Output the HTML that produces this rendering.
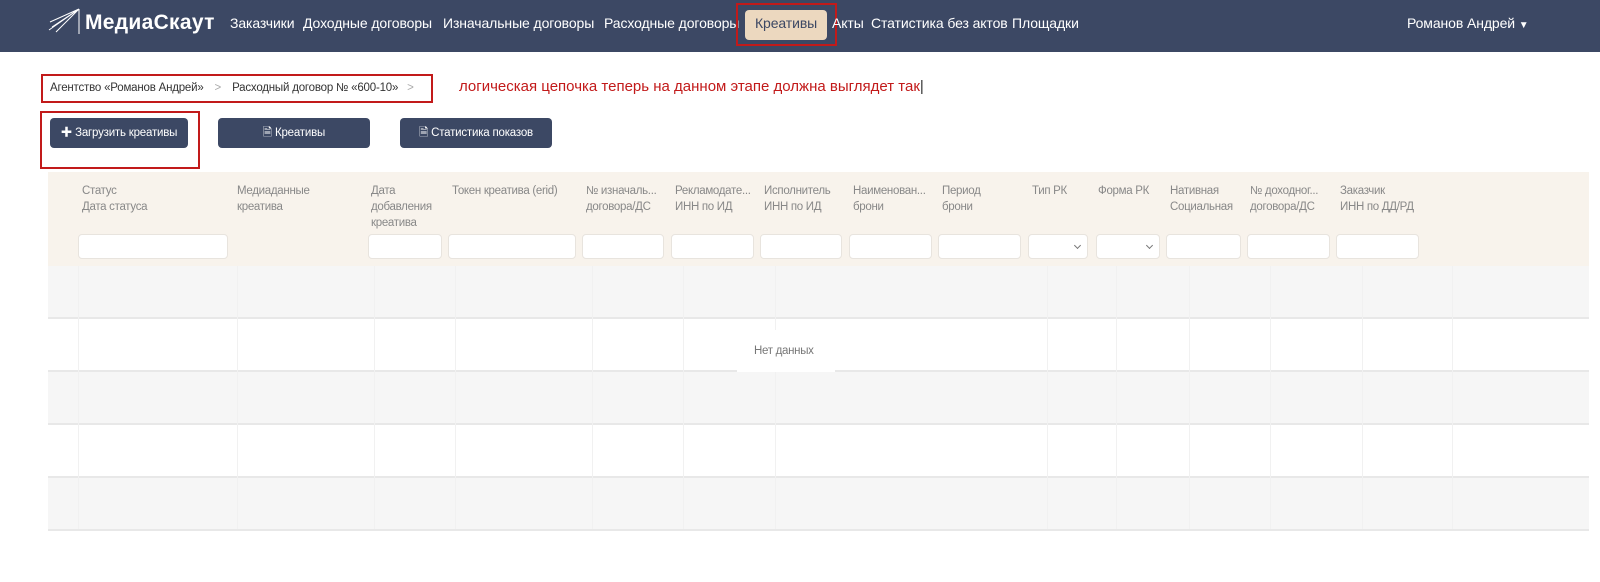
<!DOCTYPE html>
<html><head><meta charset="utf-8"><style>
*{margin:0;padding:0;box-sizing:border-box}
body{width:1600px;height:582px;background:#fff;font-family:"Liberation Sans","Noto Sans CJK SC",sans-serif;position:relative;overflow:hidden}
.a{position:absolute;white-space:nowrap}
.nav{top:0;left:0;width:1600px;height:52px;background:#3c4864}
.ni{top:15px;color:#fff;font-size:14px;letter-spacing:-0.1px}
.btn{background:#3c4864;color:#fff;font-size:11.5px;border-radius:4px;height:30px;top:118px;text-align:center;line-height:30px;letter-spacing:-0.2px}
.th{top:183px;font-size:11.5px;color:#888;line-height:16px;letter-spacing:-0.3px}
.in{top:234px;height:25px;background:#fff;border:1px solid #e8e4de;border-radius:4px}
.row{left:48px;width:1541px;height:53px;border-bottom:2px solid #e8e8e8}
.vl{top:266px;height:263px;width:1px;background:#f1f1f1}
.sel::after{content:"";position:absolute;right:7px;top:8px;width:4px;height:4px;border-right:1.5px solid #777;border-bottom:1.5px solid #777;transform:rotate(45deg)}
</style></head><body>
<div class="a nav"></div>
<svg class="a" style="left:48px;top:6px" width="34" height="30" viewBox="0 0 34 30"><g stroke="#fff" stroke-width="1" fill="none"><path d="M4 21L31 3M2 16L31 3M8 26L31 3M1 24L31 3M31 3V28"/></g></svg>
<div class="a" style="left:85px;top:11px;color:#fff;font-size:21px;font-weight:bold;letter-spacing:0.3px">МедиаСкаут</div>
<div class="a ni" style="left:230px">Заказчики</div>
<div class="a ni" style="left:303px">Доходные договоры</div>
<div class="a ni" style="left:443px">Изначальные договоры</div>
<div class="a ni" style="left:604px">Расходные договоры</div>
<div class="a" style="left:745px;top:10px;width:82px;height:30px;background:#ecd8bf;border-radius:4px"></div>
<div class="a ni" style="left:755px;color:#3c4864">Креативы</div>
<div class="a" style="left:736px;top:3px;width:101px;height:43px;border:2px solid #c21a1a"></div>
<div class="a ni" style="left:832px">Акты</div>
<div class="a ni" style="left:871px">Статистика без актов</div>
<div class="a ni" style="left:1012px">Площадки</div>
<div class="a ni" style="left:1407px">Романов Андрей <span style="font-size:10px">▼</span></div>

<div class="a" style="left:41px;top:74px;width:392px;height:29px;border:2px solid #c21a1a"></div>
<div class="a" style="left:50px;top:82px;font-size:11.5px;color:#333;letter-spacing:-0.2px">Агентство «Романов Андрей» <span style="color:#aaa;margin:0 8px">&gt;</span> Расходный договор № «600-10» <span style="color:#aaa;margin:0 6px">&gt;</span></div>
<div class="a" style="left:459px;top:78px;font-size:15px;color:#c21a1a">логическая цепочка теперь на данном этапе должна выглядет так<span style="color:#333">|</span></div>

<div class="a" style="left:40px;top:111px;width:160px;height:58px;border:2px solid #c21a1a"></div>
<div class="a btn" style="left:50px;width:138px">✚ Загрузить креативы</div>
<div class="a btn" style="left:218px;width:152px">🗎 Креативы</div>
<div class="a btn" style="left:400px;width:152px">🗎 Статистика показов</div>

<div class="a" style="left:48px;top:172px;width:1541px;height:94px;background:#f8f3ec"></div>
<div class="a th" style="left:82px">Статус<br>Дата статуса</div>
<div class="a th" style="left:237px">Медиаданные<br>креатива</div>
<div class="a th" style="left:371px">Дата<br>добавления<br>креатива</div>
<div class="a th" style="left:452px">Токен креатива (erid)</div>
<div class="a th" style="left:586px">№ изначаль...<br>договора/ДС</div>
<div class="a th" style="left:675px">Рекламодате...<br>ИНН по ИД</div>
<div class="a th" style="left:764px">Исполнитель<br>ИНН по ИД</div>
<div class="a th" style="left:853px">Наименован...<br>брони</div>
<div class="a th" style="left:942px">Период<br>брони</div>
<div class="a th" style="left:1032px">Тип РК</div>
<div class="a th" style="left:1098px">Форма РК</div>
<div class="a th" style="left:1170px">Нативная<br>Социальная</div>
<div class="a th" style="left:1250px">№ доходног...<br>договора/ДС</div>
<div class="a th" style="left:1340px">Заказчик<br>ИНН по ДД/РД</div>
<div class="a in" style="left:78px;width:150px"></div>
<div class="a in" style="left:368px;width:74px"></div>
<div class="a in" style="left:448px;width:128px"></div>
<div class="a in" style="left:582px;width:82px"></div>
<div class="a in" style="left:671px;width:83px"></div>
<div class="a in" style="left:760px;width:82px"></div>
<div class="a in" style="left:849px;width:83px"></div>
<div class="a in" style="left:938px;width:83px"></div>
<div class="a in sel" style="left:1028px;width:60px"></div>
<div class="a in sel" style="left:1096px;width:64px"></div>
<div class="a in" style="left:1166px;width:75px"></div>
<div class="a in" style="left:1247px;width:83px"></div>
<div class="a in" style="left:1336px;width:83px"></div>

<div class="a row" style="top:266px;background:#f6f6f6"></div>
<div class="a row" style="top:319px;background:#fff"></div>
<div class="a row" style="top:372px;background:#f6f6f6"></div>
<div class="a row" style="top:425px;background:#fff"></div>
<div class="a row" style="top:478px;background:#f6f6f6"></div>
<div class="a vl" style="left:78px"></div><div class="a vl" style="left:237px"></div><div class="a vl" style="left:374px"></div><div class="a vl" style="left:455px"></div><div class="a vl" style="left:592px"></div><div class="a vl" style="left:683px"></div><div class="a vl" style="left:775px"></div><div class="a vl" style="left:1047px"></div><div class="a vl" style="left:1116px"></div><div class="a vl" style="left:1189px"></div><div class="a vl" style="left:1270px"></div><div class="a vl" style="left:1362px"></div><div class="a vl" style="left:1452px"></div>
<div class="a" style="left:737px;top:330px;width:98px;height:42px;background:#fff"></div>
<div class="a" style="left:754px;top:345px;font-size:11.5px;color:#777;letter-spacing:-0.3px">Нет данных</div>
</body></html>
